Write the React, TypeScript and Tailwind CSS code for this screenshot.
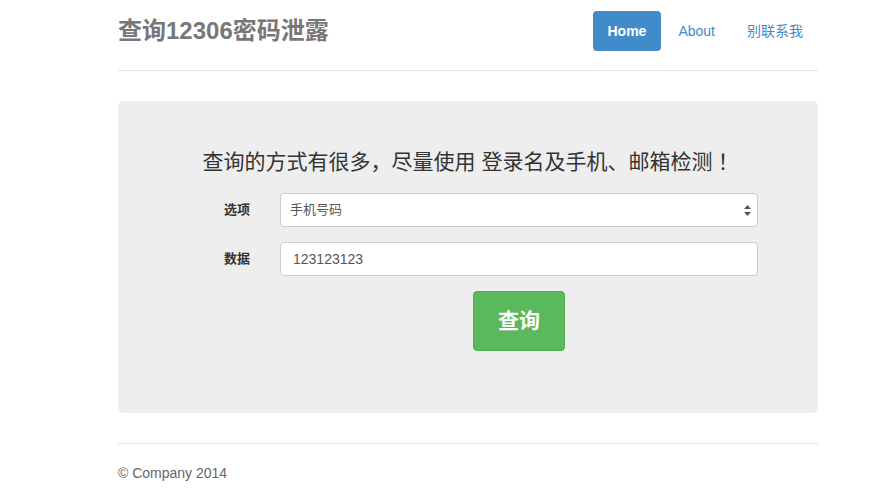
import { useState } from 'react';

const font = '[font-family:"Liberation_Sans","Noto_Sans_CJK_SC",sans-serif]';

export default function App() {
  const [kind, setKind] = useState('phone');
  const [value, setValue] = useState('123123123');

  return (
    <div className={`${font} bg-white text-[#333] text-[14px] min-h-[503px]`}>
      <div className="w-[700px] ml-[118px]">
        {/* Header */}
        <div className="flex items-center justify-between pt-[11px] pb-[19px] border-b border-[#e5e5e5]">
          <h3 className="text-[24px] leading-[40px] font-bold text-[#777] ml-0 -mt-[1px]">查询12306密码泄露</h3>
          <ul className="flex gap-[2px] mr-0">
            <li>
              <a className="block px-[15px] leading-[40px] rounded-[4px] bg-[#428bca] text-white text-[14px] font-bold">Home</a>
            </li>
            <li>
              <a className="block px-[15px] leading-[40px] rounded-[4px] text-[#428bca] text-[14px]">About</a>
            </li>
            <li>
              <a className="block px-[15px] leading-[40px] rounded-[4px] text-[#428bca] text-[14px]">别联系我</a>
            </li>
          </ul>
        </div>

        {/* Jumbotron */}
        <div className="mt-[30px] bg-[#eee] rounded-[6px] pt-[46px] pb-[62px] px-[60px]">
          <p className="h-[30px] text-center text-[21px] leading-[30px] text-[#333] mb-[16px]">
            查询的方式有很多，尽量使用 登录名及手机、邮箱检测
            <span className='leading-none [font-family:"Noto_Sans_CJK_TC",sans-serif]'>！</span>
          </p>
          <div className="flex flex-col gap-[15px]">
            <div className="flex items-center">
              <label className="w-[102px] text-right pr-[30px] font-bold text-[13px]">选项</label>
              <div className="relative flex-1">
                <select
                  value={kind}
                  onChange={(e) => setKind(e.target.value)}
                  className="appearance-none w-full h-[34px] bg-white border border-[#ccc] rounded-[4px] pl-[9px] text-[13px] text-[#555] outline-none"
                >
                  <option value="phone">手机号码</option>
                  <option value="email">邮箱</option>
                  <option value="name">登录名</option>
                </select>
                <svg className="absolute right-[7px] top-[12px] pointer-events-none" width="7" height="11" viewBox="0 0 7 11">
                  <path d="M3.5 0 L7 4 L0 4 Z" fill="#555" />
                  <path d="M0 7 L7 7 L3.5 11 Z" fill="#555" />
                </svg>
              </div>
            </div>
            <div className="flex items-center">
              <label className="w-[102px] text-right pr-[30px] font-bold text-[13px]">数据</label>
              <input
                value={value}
                onChange={(e) => setValue(e.target.value)}
                className="flex-1 h-[34px] bg-white border border-[#ccc] rounded-[4px] px-[12px] text-[14px] text-[#555] outline-none"
              />
            </div>
            <div className="flex">
              <div className="w-[102px]" />
              <div className="flex-1 flex justify-center">
                <button className="w-[92px] h-[60px] rounded-[4px] bg-[#5cb85c] border border-[#4cae4c] text-white text-[21px] font-bold">
                  查询
                </button>
              </div>
            </div>
          </div>
        </div>

        {/* Footer */}
        <div className="mt-[30px] border-t border-[#e5e5e5] pt-[19px]">
          <p className="text-[14px] leading-[20px] text-[#666]">© Company 2014</p>
        </div>
      </div>
    </div>
  );
}
